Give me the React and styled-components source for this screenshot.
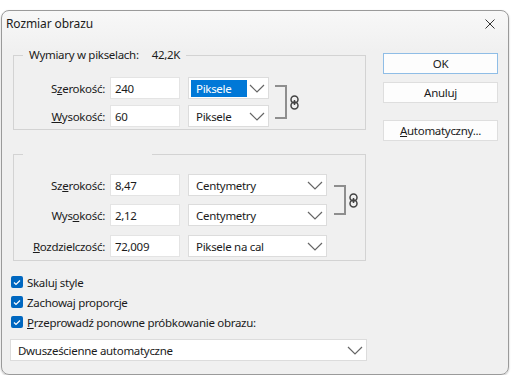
import React from 'react';
import styled, { createGlobalStyle } from 'styled-components';

const Global = createGlobalStyle`
  html, body {
    margin: 0;
    background: #fff;
  }
  body {
    font-family: "Noto Sans", "Open Sans", sans-serif;
    font-size: 11.5px;
    letter-spacing: -0.3px;
    color: #1b1b1b;
  }
`;

const Page = styled.div`
  padding: 10px 0 0 1px;
`;

const Window = styled.div`
  width: 508px;
  height: 365px;
  box-sizing: border-box;
  border: 1px solid #9a9a9a;
  border-radius: 8px;
  background: linear-gradient(#f8f8f8, #f0f0f0 40px);
  box-shadow: 0 1px 2px rgba(0, 0, 0, 0.25);
  overflow: hidden;
`;

const TitleBar = styled.div`
  height: 25px;
  display: flex;
  align-items: center;
  justify-content: space-between;
  padding: 0 13px 0 4px;
`;

const Title = styled.span`
  font-size: 12px;
  letter-spacing: -0.1px;
`;

const Close = styled.span`
  display: flex;
`;

const Body = styled.div`
  display: flex;
  padding-left: 8px;
`;

const Main = styled.div`
  width: 357px;
  display: flex;
  flex-direction: column;
`;

const Group = styled.fieldset`
  margin: ${(p) => p.$top}px 1px 0 3px;
  padding: ${(p) => p.$pt}px 0 ${(p) => p.$pb}px 0;
  border: 1px solid #d3d3d3;
  min-width: 0;
`;

const Legend = styled.legend`
  margin-left: 9px;
  padding: 0 6px;
  line-height: 14px;
  height: 14px;
  width: ${(p) => (p.$w ? `${p.$w}px` : 'auto')};
  box-sizing: border-box;
`;

const Value = styled.span`
  margin-left: 13px;
`;

const Linked = styled.div`
  display: flex;
  align-items: stretch;
`;

const Rows = styled.div`
  display: flex;
  flex-direction: column;
  gap: ${(p) => p.$gap}px;
`;

const Row = styled.div`
  display: flex;
  align-items: center;
  height: 22px;
  margin-top: ${(p) => p.$mt || 0}px;
`;

const Label = styled.span`
  width: 96px;
  box-sizing: border-box;
  padding-right: 5px;
  text-align: right;
  white-space: nowrap;
`;

const Field = styled.div`
  width: 70px;
  height: 22px;
  box-sizing: border-box;
  background: #fff;
  border: 1px solid #e4e4e4;
  padding-left: 4px;
  display: flex;
  align-items: center;
`;

const SelectBox = styled.div`
  width: ${(p) => p.$w};
  height: 22px;
  box-sizing: border-box;
  margin-left: ${(p) => p.$ml || 0}px;
  background: #fff;
  border: 1px solid #dcdcdc;
  display: flex;
  align-items: center;
  justify-content: space-between;
  padding: 0 3px 0 ${(p) => (p.$selected ? 2 : 7)}px;
`;

const SelText = styled.span`
  background: ${(p) => (p.$selected ? '#0078d7' : 'transparent')};
  color: ${(p) => (p.$selected ? '#fff' : 'inherit')};
  padding: 0 ${(p) => (p.$selected ? '5px' : '0')};
  width: ${(p) => (p.$selected ? '46px' : 'auto')};
  line-height: 17px;
`;

const Bracket = styled.div`
  width: 10px;
  margin: ${(p) => p.$inset}px 0 ${(p) => p.$inset}px ${(p) => p.$ml}px;
  border: 2px solid #8e8e8e;
  border-left: none;
`;

const LinkWrap = styled.div`
  margin-left: 3px;
  display: flex;
  align-items: center;
`;

const Checks = styled.div`
  margin-top: 11px;
  display: flex;
  flex-direction: column;
`;

const CheckRow = styled.label`
  height: 20px;
  display: flex;
  align-items: center;
  gap: 4px;
  margin-left: 1px;
`;

const Box = styled.span`
  width: 12px;
  height: 12px;
  border-radius: 2px;
  background: #0067c0;
  display: flex;
  align-items: center;
  justify-content: center;
`;

const Side = styled.div`
  width: 115px;
  margin-left: 16px;
  padding-top: 17px;
  display: flex;
  flex-direction: column;
`;

const Button = styled.div`
  height: 21px;
  box-sizing: border-box;
  margin-top: ${(p) => p.$mt || 0}px;
  background: #fdfdfd;
  border: 1px solid ${(p) => (p.$default ? '#8fbde6' : '#dedede')};
  display: flex;
  align-items: center;
  justify-content: center;
`;

const Chevron = () => (
  <svg width="16" height="9" viewBox="0 0 16 9">
    <path d="M1 1 L8 8 L15 1" fill="none" stroke="#666" strokeWidth="1.2" />
  </svg>
);

const CloseIcon = () => (
  <svg width="10" height="10" viewBox="0 0 10 10">
    <path d="M0.5 0.5 L9.5 9.5 M9.5 0.5 L0.5 9.5" stroke="#333" strokeWidth="1" />
  </svg>
);

const LinkIcon = () => (
  <svg width="9" height="15" viewBox="0 0 9 15">
    <rect x="1" y="1" width="7" height="7" rx="3.5" fill="none" stroke="#444" strokeWidth="1.5" />
    <rect x="1" y="7" width="7" height="7" rx="3.5" fill="none" stroke="#444" strokeWidth="1.5" />
    <path d="M4.5 5 V10" stroke="#444" strokeWidth="1.5" />
  </svg>
);

const Check = () => (
  <svg width="8" height="7" viewBox="0 0 8 7">
    <path d="M1 3.5 L3 5.5 L7 1.5" fill="none" stroke="#fff" strokeWidth="1.2" />
  </svg>
);

const Select = ({ w, ml, selected, children }) => (
  <SelectBox $w={w} $ml={ml} $selected={selected}>
    <SelText $selected={selected}>{children}</SelText>
    <Chevron />
  </SelectBox>
);

const App = () => (
  <Page>
    <Global />
    <Window>
      <TitleBar>
        <Title>Rozmiar obrazu</Title>
        <Close><CloseIcon /></Close>
      </TitleBar>
      <Body>
        <Main>
          <Group $top={12} $pt={15} $pb={2}>
            <Legend>
              Wymiary w pikselach:<Value>42,2K</Value>
            </Legend>
            <Linked>
              <Rows $gap={6}>
                <Row>
                  <Label>S<u>z</u>erokość:</Label>
                  <Field>240</Field>
                  <Select w="81px" ml={8} selected>Piksele</Select>
                </Row>
                <Row>
                  <Label><u>W</u>ysokość:</Label>
                  <Field>60</Field>
                  <Select w="81px" ml={8}>Piksele</Select>
                </Row>
              </Rows>
              <Bracket $ml={6} $inset={8} />
              <LinkWrap><LinkIcon /></LinkWrap>
            </Linked>
          </Group>
          <Group $top={17} $pt={13} $pb={3}>
            <Legend $w={129} />
            <Linked>
              <Rows $gap={8}>
                <Row>
                  <Label>Sz<u>e</u>rokość:</Label>
                  <Field>8,47</Field>
                  <Select w="139px" ml={8}>Centymetry</Select>
                </Row>
                <Row>
                  <Label>Wys<u>o</u>kość:</Label>
                  <Field>2,12</Field>
                  <Select w="139px" ml={8}>Centymetry</Select>
                </Row>
              </Rows>
              <Bracket $ml={7} $inset={11} />
              <LinkWrap><LinkIcon /></LinkWrap>
            </Linked>
            <Row $mt={9}>
              <Label><u>R</u>ozdzielczość:</Label>
              <Field>72,009</Field>
              <Select w="139px" ml={8}>Piksele na cal</Select>
            </Row>
          </Group>
          <Checks>
            <CheckRow><Box><Check /></Box>Skaluj style</CheckRow>
            <CheckRow><Box><Check /></Box>Zachowaj proporcje</CheckRow>
            <CheckRow><Box><Check /></Box><span><u>P</u>rzeprowadź ponowne próbkowanie obrazu:</span></CheckRow>
          </Checks>
          <Row $mt={7}>
            <Select w="100%">Dwusześcienne automatyczne</Select>
          </Row>
        </Main>
        <Side>
          <Button $default>OK</Button>
          <Button $mt={8}>Anuluj</Button>
          <Button $mt={17}><span><u>A</u>utomatyczny...</span></Button>
        </Side>
      </Body>
    </Window>
  </Page>
);

export default App;
